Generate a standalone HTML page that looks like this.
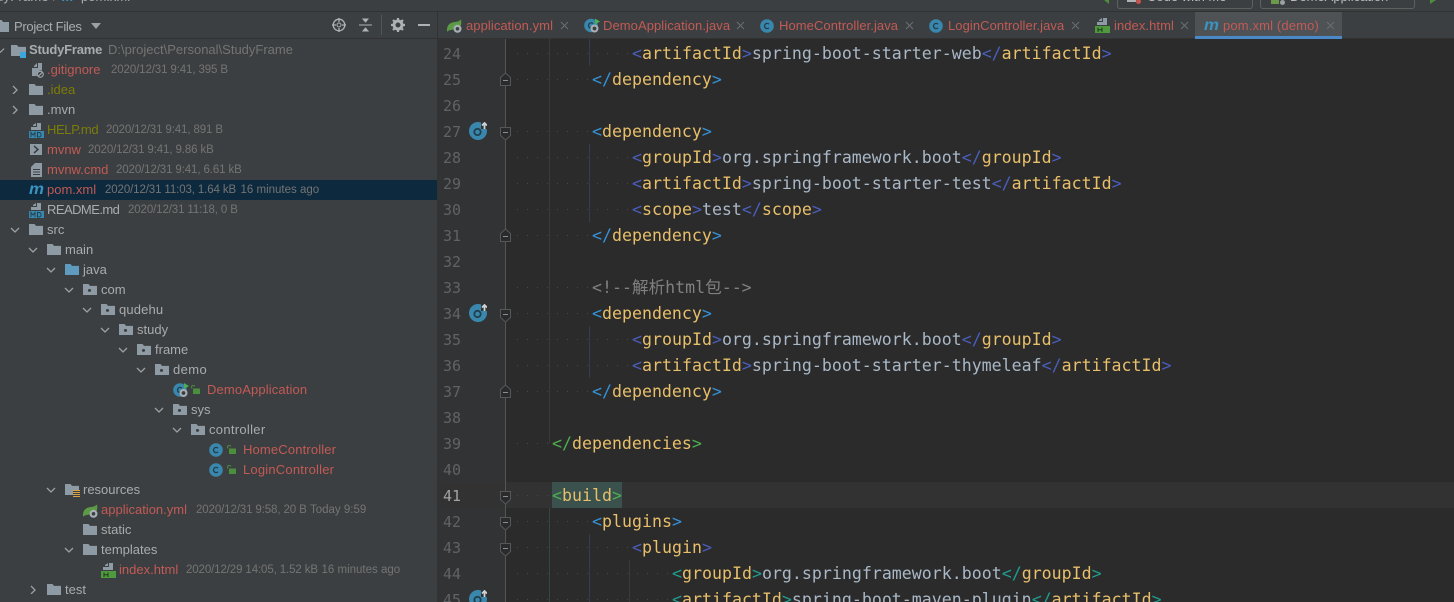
<!DOCTYPE html>
<html><head><meta charset="utf-8"><style>
html,body{margin:0;padding:0;background:#2b2b2b;width:1454px;height:602px;overflow:hidden}
#root{position:relative;width:1454px;height:602px;overflow:hidden;font-family:"Liberation Sans","Noto Sans CJK SC",sans-serif;font-size:13px;color:#a9acae}
.a{position:absolute}
.t{position:absolute;white-space:nowrap;height:20px;line-height:20px;margin-top:1px}
.red{color:#c25a55}.ol{color:#7c7c08}.m{color:#747474;font-size:11.5px;letter-spacing:-.12px}.m2{color:#747474;font-size:11.5px}
svg{position:absolute;overflow:visible}
.tab{position:absolute;top:15px;height:20px;line-height:22px;color:#c25a55;white-space:nowrap;letter-spacing:.07px}
.n{position:absolute;left:443px;width:20px;height:26px;margin-top:1px;font:15px/26px "DejaVu Sans Mono",monospace;color:#606366}
.c{position:absolute;height:26px;line-height:26px;margin-top:1px;white-space:pre;font-family:"DejaVu Sans Mono","Noto Sans CJK SC",monospace;font-size:16.6px;color:#a9b7c6}
.d{position:absolute;left:517px;height:1px;background:repeating-linear-gradient(90deg,#474747 0 1px,transparent 1px 10px)}
.g{color:#e8bf6a}.b{color:#3592d8}.i{color:#4a5ebd}.e{color:#1f9e8e}.f{color:#4caf50}.k{color:#808080}
</style></head><body><div id="root">
<svg width="0" height="0" style="position:absolute"><defs>
<symbol id="fo" viewBox="0 0 14 12" preserveAspectRatio="none"><path d="M0 0h5.5l1.500 2H14v10H0z" fill="#8e9ba4"/></symbol>
<symbol id="pk" viewBox="0 0 14 12" preserveAspectRatio="none"><path d="M0 0h5.500l1.500 2H14v10H0z" fill="#8e9ba4"/><circle cx="6.500" cy="7" r="1.600" fill="#3c3f41"/></symbol>
<symbol id="jf" viewBox="0 0 14 12" preserveAspectRatio="none"><path d="M0 0h5.500l1.500 2H14v10H0z" fill="#5f9bbf"/></symbol>
<symbol id="cr" viewBox="0 -1 10 10"><path d="M3 1l4 4-4 4" fill="none" stroke="#9da0a2" stroke-width="1.300"/></symbol>
<symbol id="cd" viewBox="0 -1 10 10"><path d="M1 3l4 4 4-4" fill="none" stroke="#9da0a2" stroke-width="1.300"/></symbol>
<symbol id="cl" viewBox="0 0 14 14"><circle cx="7" cy="7" r="6.800" fill="#3a87ad"/><path d="M9 5.200A2.600 2.600 0 1 0 9 8.800" fill="none" stroke="#20404f" stroke-width="1.300"/></symbol>
<symbol id="lk" viewBox="0 0 9 9"><rect x="2" y="3.500" width="7" height="5.500" fill="#4b8f3c"/><path d="M.7 3.500V2a1.500 1.500 0 0 1 3-.500" fill="none" stroke="#4b8f3c" stroke-width="1.100"/></symbol>
<symbol id="sp" viewBox="0 0 15 14"><path d="M0 11C0 6 3 3.500 8 3c2.500-.2 4.500-1 6-2.500.6 3 .4 7-2 8.500L4 11C2.500 11 1 11.500 0 13z" fill="#5c9b46"/><circle cx="10.500" cy="9.800" r="4" fill="#a8b0b5"/><circle cx="10.500" cy="9.800" r="1.800" fill="#3c3f41"/></symbol>
<symbol id="ap" viewBox="0 0 16 14"><circle cx="7" cy="7" r="6.800" fill="#3a87ad"/><path d="M9 5.200A2.600 2.600 0 1 0 9 8.800" fill="none" stroke="#20404f" stroke-width="1.300"/><path d="M11 0l5 3-5 3z" fill="#4caf50"/><circle cx="10.500" cy="10" r="4" fill="#a8b0b5"/><circle cx="10.500" cy="10" r="1.900" fill="#3c3f41"/></symbol>
<symbol id="mv" viewBox="0 0 15 11"><text x="0" y="10" font-family="Liberation Sans" font-size="16" font-weight="700" font-style="italic" fill="#3a93c0" textLength="15" lengthAdjust="spacingAndGlyphs">m</text></symbol>
<symbol id="md" viewBox="0 0 15 15"><path d="M4 2L7 0v3H4zM8 0h4v7H2V4h6z" fill="#8e9ba4"/><rect y="8" width="15" height="7" fill="#3a87ad"/><path d="M2 14V9.500l2 2.500 2-2.500V14M8.500 9.500V14h1.500a2 2 0 0 0 2-2.200 2 2 0 0 0-2-2.300z" fill="none" stroke="#20404f"/></symbol>
<symbol id="ht" viewBox="0 0 15 15"><path d="M4 2L7 0v3H4zM8 0h4v7H2V4h6z" fill="#8e9ba4"/><rect y="8" width="15" height="7" fill="#4f9a3f"/><path d="M3 9.500V14M7 9.500V14M3 11.700h4" fill="none" stroke="#1d3a18"/></symbol>
<symbol id="fe" viewBox="0 0 13 15"><path d="M3 3l3-3v4H3zM7 0h4v7.500A4.200 4.200 0 0 0 6 13H1V5h6z" fill="#8e9ba4"/><circle cx="9.300" cy="11.300" r="3" fill="none" stroke="#a0a8ad" stroke-width="1.100"/><path d="M7.300 13.300l4-4" stroke="#a0a8ad" stroke-width="1.100"/></symbol>
<symbol id="gi" viewBox="0 0 18 18"><circle cx="9" cy="9" r="9" fill="#3a87ad"/><circle cx="8.500" cy="10" r="3.200" fill="none" stroke="#20404f" stroke-width="1.800"/><path d="M12 -2h8v9h-8z" fill="#313335"/><path d="M15.500 7V1.500M13 3.500l2.500-2.500 2.500 2.500" fill="none" stroke="#cfd2d4" stroke-width="1.800"/></symbol>
<symbol id="fs" viewBox="0 0 11 14"><path d="M.5 .5h10v8L5.500 13 .5 8.500z" fill="#2b2b2b" stroke="#55585a"/><path d="M3 5.500h5" stroke="#8a8d8f"/></symbol>
<symbol id="fu" viewBox="0 0 11 14"><path d="M.5 13.500h10v-8L5.500 1 .5 5.500z" fill="#2b2b2b" stroke="#55585a"/><path d="M3 8.500h5" stroke="#8a8d8f"/></symbol>
<symbol id="x" viewBox="0 0 9 9"><path d="M1 1l7 7M8 1l-7 7" stroke="#6a6d6f" stroke-width="1.100"/></symbol>
</defs></svg>

<!-- top bar -->
<div class="a" style="left:0;top:0;width:1454px;height:11px;background:#3c3f41"></div>
<div class="a" style="left:0;top:11px;width:1454px;height:1px;background:#323232"></div>
<div class="t" style="left:-24px;top:-14px;color:#a9acae;letter-spacing:.2px">StudyFrame</div>
<div class="t" style="left:53px;top:-14px;color:#7a7d7f">/</div>
<div class="t" style="left:62px;top:-14px;color:#3a93c0;font-weight:700;font-style:italic">m</div>
<div class="t" style="left:81px;top:-14px;color:#a9acae">pom.xml</div>
<svg style="left:1103px;top:-4px" width="8" height="8"><path d="M6 0L1 4l5 4z" fill="#4b8f3c"/></svg>
<div class="a" style="left:1117px;top:-12px;width:134px;height:19px;border:1px solid #5e6060;border-radius:3px"></div>
<div class="a" style="left:1127px;top:-3px;width:9px;height:5px;background:#afb1b3"></div>
<div class="a" style="left:1136px;top:-1px;width:5px;height:5px;border-radius:50%;background:#c75450"></div>
<div class="t" style="left:1147px;top:-14px;color:#bbb">Code with Me</div>
<div class="a" style="left:1260px;top:-12px;width:153px;height:19px;border:1px solid #5e6060;border-radius:3px"></div>
<div class="a" style="left:1271px;top:-2px;width:8px;height:6px;background:#6a9a4a"></div>
<div class="a" style="left:1280px;top:0;width:5px;height:5px;background:#9aa0a4;border-radius:50%"></div>
<div class="t" style="left:1290px;top:-14px;color:#bbb">DemoApplication</div>
<svg style="left:1429px;top:-4px" width="8" height="8"><path d="M1 0l6 4-6 4z" fill="#4b8f3c"/></svg>

<!-- project panel -->
<div class="a" style="left:0;top:12px;width:437px;height:590px;background:#3c3f41"></div>
<div class="a" style="left:437px;top:12px;width:1px;height:590px;background:#323232"></div>
<div class="a" style="left:0;top:38px;width:437px;height:1px;background:#323232"></div>
<svg style="left:-3px;top:20px" width="12" height="12"><use href="#fo"/></svg>
<div class="t" style="left:14px;top:16px;letter-spacing:-.3px">Project Files</div>
<svg style="left:91px;top:23px" width="10" height="6"><path d="M0 0h10L5 6z" fill="#9da0a2"/></svg>
<svg style="left:332px;top:18px" width="14" height="14"><circle cx="7" cy="7" r="5.800" fill="none" stroke="#afb1b3" stroke-width="1.300"/><circle cx="7" cy="7" r="2" fill="none" stroke="#afb1b3"/><path d="M7 0v4M7 10v4M0 7h4M10 7h4" stroke="#afb1b3" stroke-width="1.300"/></svg>
<svg style="left:359px;top:18px" width="13" height="14"><path d="M0 7h13M4 1h5L6.500 4zM4 13h5L6.500 10z" fill="#afb1b3" stroke="#afb1b3"/></svg>
<div class="a" style="left:381px;top:15px;width:1px;height:20px;background:#515658"></div>
<svg style="left:391px;top:18px" width="14" height="14" viewBox="0 0 14 14"><circle cx="7" cy="7" r="4" fill="none" stroke="#afb1b3" stroke-width="3"/><path d="M7 0v3M7 11v3M0 7h3M11 7h3M2 2l2 2M10 10l2 2M12 2l-2 2M2 12l2-2" stroke="#afb1b3" stroke-width="2.200"/></svg>
<div class="a" style="left:418px;top:24px;width:12px;height:2px;background:#afb1b3"></div>

<!-- selected row -->
<div class="a" style="left:0;top:180px;width:437px;height:20px;background:#0d293e"></div>

<!-- tree -->
<svg style="left:-4px;top:45px" width="9" height="9"><use href="#cd"/></svg>
<svg style="left:11px;top:45px" width="15" height="11"><use href="#fo"/></svg>
<div class="a" style="left:20px;top:52px;width:6px;height:6px;background:#3aa6dc"></div>
<div class="t" style="left:29px;top:39px;font-weight:700;letter-spacing:-.2px">StudyFrame</div>
<div class="t" style="left:108px;top:39px;color:#747474">D:\project\Personal\StudyFrame</div>

<svg style="left:31px;top:63px" width="13" height="15"><use href="#fe"/></svg>
<div class="t red" style="left:47px;top:59px">.gitignore</div><div class="t m" style="left:111px;top:59px">2020/12/31 9:41, 395 B</div>

<svg style="left:10px;top:84px" width="10" height="10"><use href="#cr"/></svg>
<svg style="left:29px;top:84px" width="14" height="11"><use href="#fo"/></svg>
<div class="t ol" style="left:47px;top:79px">.idea</div>

<svg style="left:10px;top:104px" width="10" height="10"><use href="#cr"/></svg>
<svg style="left:29px;top:104px" width="14" height="11"><use href="#fo"/></svg>
<div class="t" style="left:47px;top:99px">.mvn</div>

<svg style="left:29px;top:123px" width="15" height="15"><use href="#md"/></svg>
<div class="t ol" style="left:47px;top:119px;letter-spacing:-.4px">HELP.md</div><div class="t m" style="left:106px;top:119px">2020/12/31 9:41, 891 B</div>

<div class="a" style="left:30px;top:144px;width:12px;height:11px;background:#8e9ba4"></div>
<svg style="left:33px;top:146px" width="6" height="7"><path d="M1 0l4 3.500-4 3.500" fill="none" stroke="#3c3f41" stroke-width="1.500"/></svg>
<div class="t red" style="left:47px;top:139px">mvnw</div><div class="t m" style="left:88px;top:139px">2020/12/31 9:41, 9.86 kB</div>

<svg style="left:31px;top:163px" width="11" height="14" viewBox="0 0 11 14"><path d="M4 0h7v14H0V4z" fill="#8e9ba4"/><path d="M2 6.500h7M2 9h7M2 11.500h7" stroke="#3c3f41"/></svg>
<div class="t red" style="left:47px;top:159px">mvnw.cmd</div><div class="t m" style="left:116px;top:159px">2020/12/31 9:41, 6.61 kB</div>

<svg style="left:29px;top:184px" width="15" height="11"><use href="#mv"/></svg>
<div class="t red" style="left:47px;top:179px">pom.xml</div><div class="t m" style="left:105px;top:179px">2020/12/31 11:03, 1.64 kB</div><div class="t m2" style="left:240.500px;top:179px">16 minutes ago</div>

<svg style="left:29px;top:203px" width="15" height="15"><use href="#md"/></svg>
<div class="t" style="left:47px;top:199px;letter-spacing:-.55px">README.md</div><div class="t m" style="left:128px;top:199px">2020/12/31 11:18, 0 B</div>

<svg style="left:10px;top:224px" width="10" height="10"><use href="#cd"/></svg>
<svg style="left:29px;top:224px" width="14" height="11"><use href="#fo"/></svg>
<div class="t" style="left:47px;top:219px">src</div>

<svg style="left:28px;top:244px" width="10" height="10"><use href="#cd"/></svg>
<svg style="left:47px;top:244px" width="14" height="11"><use href="#fo"/></svg>
<div class="t" style="left:65px;top:239px">main</div>

<svg style="left:46px;top:264px" width="10" height="10"><use href="#cd"/></svg>
<svg style="left:65px;top:264px" width="14" height="11"><use href="#jf"/></svg>
<div class="t" style="left:83px;top:259px">java</div>

<svg style="left:64px;top:284px" width="10" height="10"><use href="#cd"/></svg>
<svg style="left:83px;top:284px" width="14" height="11"><use href="#pk"/></svg>
<div class="t" style="left:101px;top:279px">com</div>

<svg style="left:82px;top:304px" width="10" height="10"><use href="#cd"/></svg>
<svg style="left:101px;top:304px" width="14" height="11"><use href="#pk"/></svg>
<div class="t" style="left:119px;top:299px;letter-spacing:.15px">qudehu</div>

<svg style="left:100px;top:324px" width="10" height="10"><use href="#cd"/></svg>
<svg style="left:119px;top:324px" width="14" height="11"><use href="#pk"/></svg>
<div class="t" style="left:137px;top:319px">study</div>

<svg style="left:118px;top:344px" width="10" height="10"><use href="#cd"/></svg>
<svg style="left:137px;top:344px" width="14" height="11"><use href="#pk"/></svg>
<div class="t" style="left:155px;top:339px">frame</div>

<svg style="left:136px;top:364px" width="10" height="10"><use href="#cd"/></svg>
<svg style="left:155px;top:364px" width="14" height="11"><use href="#pk"/></svg>
<div class="t" style="left:173px;top:359px;letter-spacing:.4px">demo</div>

<svg style="left:173px;top:383px" width="16" height="14"><use href="#ap"/></svg>
<svg style="left:191px;top:385px" width="9" height="9"><use href="#lk"/></svg>
<div class="t red" style="left:207px;top:379px;letter-spacing:.13px">DemoApplication</div>

<svg style="left:154px;top:404px" width="10" height="10"><use href="#cd"/></svg>
<svg style="left:173px;top:404px" width="14" height="11"><use href="#pk"/></svg>
<div class="t" style="left:191px;top:399px">sys</div>

<svg style="left:172px;top:424px" width="10" height="10"><use href="#cd"/></svg>
<svg style="left:191px;top:424px" width="14" height="11"><use href="#pk"/></svg>
<div class="t" style="left:209px;top:419px;letter-spacing:.3px">controller</div>

<svg style="left:209px;top:443px" width="14" height="14"><use href="#cl"/></svg>
<svg style="left:227px;top:445px" width="9" height="9"><use href="#lk"/></svg>
<div class="t red" style="left:243px;top:439px;letter-spacing:.15px">HomeController</div>

<svg style="left:209px;top:463px" width="14" height="14"><use href="#cl"/></svg>
<svg style="left:227px;top:465px" width="9" height="9"><use href="#lk"/></svg>
<div class="t red" style="left:243px;top:459px;letter-spacing:.2px">LoginController</div>

<svg style="left:46px;top:484px" width="10" height="10"><use href="#cd"/></svg>
<svg style="left:65px;top:484px" width="14" height="11"><use href="#fo"/></svg>
<div class="a" style="left:73px;top:490px;width:7px;height:7px;background:repeating-linear-gradient(#d9a343 0 1px,#3c3f41 1px 2px)"></div>
<div class="t" style="left:83px;top:479px">resources</div>

<svg style="left:83px;top:504px" width="15" height="14"><use href="#sp"/></svg>
<div class="t red" style="left:101px;top:499px">application.yml</div><div class="t m" style="left:196px;top:499px">2020/12/31 9:58, 20 B</div><div class="t m2" style="left:310px;top:499px">Today 9:59</div>

<svg style="left:83px;top:524px" width="14" height="11"><use href="#fo"/></svg>
<div class="t" style="left:101px;top:519px">static</div>

<svg style="left:64px;top:544px" width="10" height="10"><use href="#cd"/></svg>
<svg style="left:83px;top:544px" width="14" height="11"><use href="#fo"/></svg>
<div class="t" style="left:101px;top:539px">templates</div>

<svg style="left:101px;top:563px" width="15" height="15"><use href="#ht"/></svg>
<div class="t red" style="left:119px;top:559px">index.html</div><div class="t m" style="left:186px;top:559px">2020/12/29 14:05, 1.52 kB</div><div class="t m2" style="left:321.500px;top:559px">16 minutes ago</div>

<svg style="left:28px;top:584px" width="10" height="10"><use href="#cr"/></svg>
<svg style="left:47px;top:584px" width="14" height="11"><use href="#fo"/></svg>
<div class="t" style="left:65px;top:579px">test</div>

<!-- tabs -->
<div class="a" style="left:438px;top:12px;width:1016px;height:26px;background:#3c3f41"></div>
<div class="a" style="left:438px;top:38px;width:1016px;height:1px;background:#323232"></div>
<div class="a" style="left:1195px;top:12px;width:147px;height:24px;background:#4e5254"></div>
<div class="a" style="left:1195px;top:36px;width:147px;height:3px;background:#4a88c7"></div>
<svg style="left:447px;top:19px" width="15" height="14"><use href="#sp"/></svg>
<div class="tab" style="left:466px">application.yml</div><svg style="left:560px;top:21px" width="9" height="9"><use href="#x"/></svg>
<svg style="left:584px;top:18px" width="16" height="15"><use href="#ap"/></svg>
<div class="tab" style="left:603px">DemoApplication.java</div><svg style="left:736px;top:21px" width="9" height="9"><use href="#x"/></svg>
<svg style="left:760px;top:19px" width="14" height="14"><use href="#cl"/></svg>
<div class="tab" style="left:779px">HomeController.java</div><svg style="left:905px;top:21px" width="9" height="9"><use href="#x"/></svg>
<svg style="left:929px;top:19px" width="14" height="14"><use href="#cl"/></svg>
<div class="tab" style="left:948px">LoginController.java</div><svg style="left:1071px;top:21px" width="9" height="9"><use href="#x"/></svg>
<svg style="left:1095px;top:18px" width="15" height="15"><use href="#ht"/></svg>
<div class="tab" style="left:1114px">index.html</div><svg style="left:1180px;top:21px" width="9" height="9"><use href="#x"/></svg>
<svg style="left:1204px;top:20px" width="15" height="11"><use href="#mv"/></svg>
<div class="tab" style="left:1223px;letter-spacing:.15px">pom.xml (demo)</div><svg style="left:1326px;top:21px" width="9" height="9"><use href="#x"/></svg>

<!-- editor -->
<div class="a" style="left:438px;top:39px;width:67px;height:563px;background:#313335"></div>
<div class="a" style="left:505px;top:39px;width:1px;height:563px;background:#555555"></div>
<div class="a" style="left:438px;top:482px;width:1016px;height:26px;background:#323232"></div>
<div class="a" style="left:505px;top:482px;width:1px;height:26px;background:#555555"></div>
<div class="a" style="left:552px;top:482px;width:70px;height:26px;background:#3b514d"></div>

<!-- indent guides -->
<div class="a" style="left:549px;top:39px;width:1px;height:404px;background:#3b3b3b"></div>
<div class="a" style="left:589px;top:39px;width:1px;height:27px;background:#343d55"></div>
<div class="a" style="left:589px;top:144px;width:1px;height:78px;background:#343d55"></div>
<div class="a" style="left:589px;top:326px;width:1px;height:52px;background:#343d55"></div>
<div class="a" style="left:549px;top:508px;width:1px;height:94px;background:#35493a"></div>
<div class="a" style="left:589px;top:534px;width:1px;height:68px;background:#343d55"></div>
<div class="a" style="left:629px;top:560px;width:1px;height:42px;background:#3b3b3b"></div>

<!-- line numbers -->
<div class="n" style="top:40px">24</div><div class="n" style="top:66px">25</div><div class="n" style="top:92px">26</div><div class="n" style="top:118px">27</div><div class="n" style="top:144px">28</div><div class="n" style="top:170px">29</div><div class="n" style="top:196px">30</div><div class="n" style="top:222px">31</div><div class="n" style="top:248px">32</div><div class="n" style="top:274px">33</div><div class="n" style="top:300px">34</div><div class="n" style="top:326px">35</div><div class="n" style="top:352px">36</div><div class="n" style="top:378px">37</div><div class="n" style="top:404px">38</div><div class="n" style="top:430px">39</div><div class="n" style="top:456px">40</div><div class="n" style="top:482px;color:#a4a3a3">41</div><div class="n" style="top:508px">42</div><div class="n" style="top:534px">43</div><div class="n" style="top:560px">44</div><div class="n" style="top:586px">45</div>

<!-- gutter icons -->
<svg style="left:469px;top:122px" width="18" height="18"><use href="#gi"/></svg>
<svg style="left:469px;top:304px" width="18" height="18"><use href="#gi"/></svg>
<svg style="left:469px;top:590px" width="18" height="18"><use href="#gi"/></svg>

<!-- fold marks -->
<svg style="left:500px;top:72px" width="11" height="14"><use href="#fu"/></svg>
<svg style="left:500px;top:127px" width="11" height="14"><use href="#fs"/></svg>
<svg style="left:500px;top:228px" width="11" height="14"><use href="#fu"/></svg>
<svg style="left:500px;top:309px" width="11" height="14"><use href="#fs"/></svg>
<svg style="left:500px;top:384px" width="11" height="14"><use href="#fu"/></svg>
<svg style="left:500px;top:491px" width="11" height="14"><use href="#fs"/></svg>
<svg style="left:500px;top:517px" width="11" height="14"><use href="#fs"/></svg>
<svg style="left:500px;top:543px" width="11" height="14"><use href="#fs"/></svg>

<!-- whitespace dots -->
<div class="d" style="top:53px;width:115px"></div><div class="d" style="top:79px;width:75px"></div><div class="d" style="top:131px;width:75px"></div><div class="d" style="top:157px;width:115px"></div><div class="d" style="top:183px;width:115px"></div><div class="d" style="top:209px;width:115px"></div><div class="d" style="top:235px;width:75px"></div><div class="d" style="top:287px;width:75px"></div><div class="d" style="top:313px;width:75px"></div><div class="d" style="top:339px;width:115px"></div><div class="d" style="top:365px;width:115px"></div><div class="d" style="top:391px;width:75px"></div><div class="d" style="top:443px;width:35px"></div><div class="d" style="top:495px;width:35px"></div><div class="d" style="top:521px;width:75px"></div><div class="d" style="top:547px;width:115px"></div><div class="d" style="top:573px;width:155px"></div><div class="d" style="top:599px;width:155px"></div>

<!-- code -->
<div class="c" style="left:632px;top:40px"><span class="i">&lt;</span><span class="g">artifactId</span><span class="i">&gt;</span>spring-boot-starter-web<span class="i">&lt;/</span><span class="g">artifactId</span><span class="i">&gt;</span></div>
<div class="c" style="left:592px;top:66px"><span class="b">&lt;/</span><span class="g">dependency</span><span class="b">&gt;</span></div>
<div class="c" style="left:592px;top:118px"><span class="b">&lt;</span><span class="g">dependency</span><span class="b">&gt;</span></div>
<div class="c" style="left:632px;top:144px"><span class="i">&lt;</span><span class="g">groupId</span><span class="i">&gt;</span>org.springframework.boot<span class="i">&lt;/</span><span class="g">groupId</span><span class="i">&gt;</span></div>
<div class="c" style="left:632px;top:170px"><span class="i">&lt;</span><span class="g">artifactId</span><span class="i">&gt;</span>spring-boot-starter-test<span class="i">&lt;/</span><span class="g">artifactId</span><span class="i">&gt;</span></div>
<div class="c" style="left:632px;top:196px"><span class="i">&lt;</span><span class="g">scope</span><span class="i">&gt;</span>test<span class="i">&lt;/</span><span class="g">scope</span><span class="i">&gt;</span></div>
<div class="c" style="left:592px;top:222px"><span class="b">&lt;/</span><span class="g">dependency</span><span class="b">&gt;</span></div>
<div class="c k" style="left:592px;top:274px">&lt;!--解析html包--&gt;</div>
<div class="c" style="left:592px;top:300px"><span class="b">&lt;</span><span class="g">dependency</span><span class="b">&gt;</span></div>
<div class="c" style="left:632px;top:326px"><span class="i">&lt;</span><span class="g">groupId</span><span class="i">&gt;</span>org.springframework.boot<span class="i">&lt;/</span><span class="g">groupId</span><span class="i">&gt;</span></div>
<div class="c" style="left:632px;top:352px"><span class="i">&lt;</span><span class="g">artifactId</span><span class="i">&gt;</span>spring-boot-starter-thymeleaf<span class="i">&lt;/</span><span class="g">artifactId</span><span class="i">&gt;</span></div>
<div class="c" style="left:592px;top:378px"><span class="b">&lt;/</span><span class="g">dependency</span><span class="b">&gt;</span></div>
<div class="c" style="left:552px;top:430px"><span class="f">&lt;/</span><span class="g">dependencies</span><span class="f">&gt;</span></div>
<div class="c" style="left:552px;top:482px"><span class="f">&lt;</span><span class="g">build</span><span class="f">&gt;</span></div>
<div class="c" style="left:592px;top:508px"><span class="b">&lt;</span><span class="g">plugins</span><span class="b">&gt;</span></div>
<div class="c" style="left:632px;top:534px"><span class="i">&lt;</span><span class="g">plugin</span><span class="i">&gt;</span></div>
<div class="c" style="left:672px;top:560px"><span class="e">&lt;</span><span class="g">groupId</span><span class="e">&gt;</span>org.springframework.boot<span class="e">&lt;/</span><span class="g">groupId</span><span class="e">&gt;</span></div>
<div class="c" style="left:672px;top:586px"><span class="e">&lt;</span><span class="g">artifactId</span><span class="e">&gt;</span>spring-boot-maven-plugin<span class="e">&lt;/</span><span class="g">artifactId</span><span class="e">&gt;</span></div>
</div></body></html>
